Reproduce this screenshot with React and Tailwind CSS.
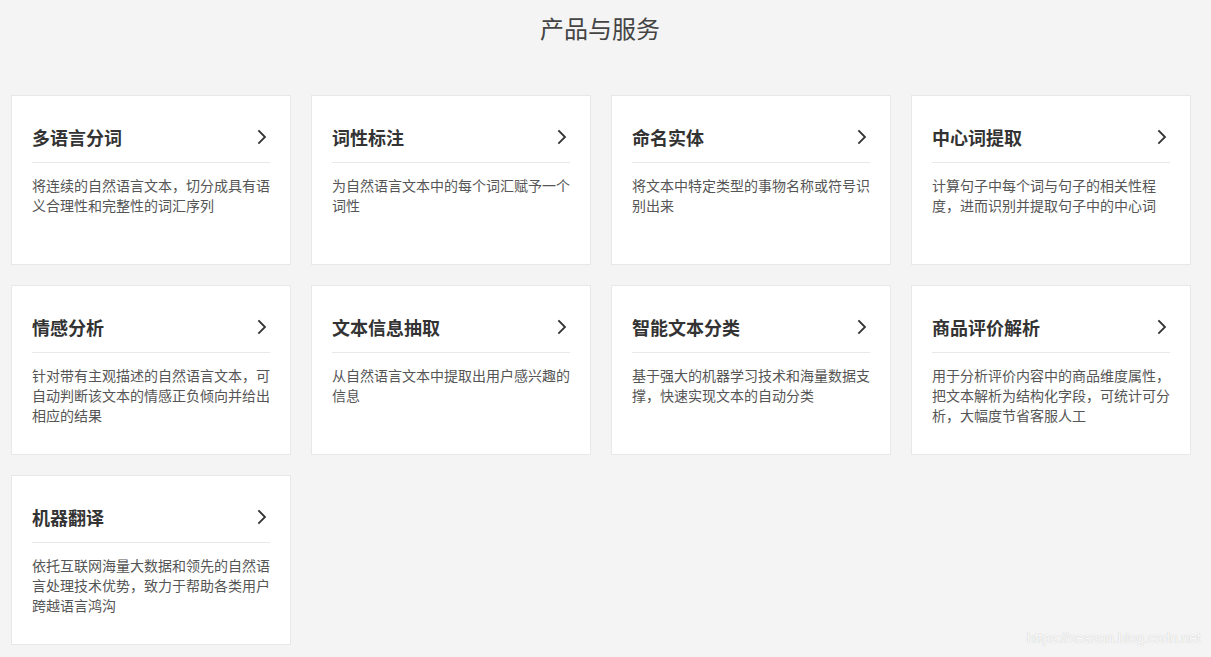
import React from "react";

const items = [
  { title: "多语言分词", desc: "将连续的自然语言文本，切分成具有语义合理性和完整性的词汇序列" },
  { title: "词性标注", desc: "为自然语言文本中的每个词汇赋予一个词性" },
  { title: "命名实体", desc: "将文本中特定类型的事物名称或符号识别出来" },
  { title: "中心词提取", desc: "计算句子中每个词与句子的相关性程度，进而识别并提取句子中的中心词" },
  { title: "情感分析", desc: "针对带有主观描述的自然语言文本，可自动判断该文本的情感正负倾向并给出相应的结果" },
  { title: "文本信息抽取", desc: "从自然语言文本中提取出用户感兴趣的信息" },
  { title: "智能文本分类", desc: "基于强大的机器学习技术和海量数据支撑，快速实现文本的自动分类" },
  { title: "商品评价解析", desc: "用于分析评价内容中的商品维度属性，把文本解析为结构化字段，可统计可分析，大幅度节省客服人工" },
  { title: "机器翻译", desc: "依托互联网海量大数据和领先的自然语言处理技术优势，致力于帮助各类用户跨越语言鸿沟" },
];

const Chevron = () => (
  <svg width="10" height="16" viewBox="0 0 10 16" fill="none" className="mr-[3px]">
    <path d="M2 2l6 6-6 6" stroke="#333" strokeWidth="1.8" strokeLinecap="square" />
  </svg>
);

export default function App() {
  return (
    <div
      className="relative min-h-[657px] w-[1211px] bg-[#f4f4f4]"
      style={{ fontFamily: '"Microsoft YaHei", "Noto Sans CJK SC", sans-serif' }}
    >
      {/* Header */}
      <h2 className="w-[1200px] pt-[11px] text-center text-[24px] leading-[34px] font-normal text-[#444]">
        产品与服务
      </h2>

      {/* Grid */}
      <div className="ml-[11px] mt-[50px] grid w-[1180px] grid-cols-4 gap-5">
        {items.map((item, i) => (
          <div
            key={i}
            className="h-[170px] border border-[#e8e8e8] bg-white px-5 pt-[29px]"
          >
            <div className="flex items-center justify-between border-b border-[#e8e8e8] pb-[13px]">
              <h3 className="text-[18px] leading-6 font-bold text-[#333]">{item.title}</h3>
              <Chevron />
            </div>
            <p className="mt-3 text-[14px] leading-5 text-[#555]">{item.desc}</p>
          </div>
        ))}
      </div>

      {/* Watermark */}
      <div
        className="absolute right-[10px] bottom-[9px] text-[14px] leading-5 text-[#fafafa] [text-shadow:0_0_1px_#bbb]"
        style={{ fontFamily: '"Liberation Sans", Arial, sans-serif' }}
      >
        https://season.blog.csdn.net
      </div>
    </div>
  );
}
